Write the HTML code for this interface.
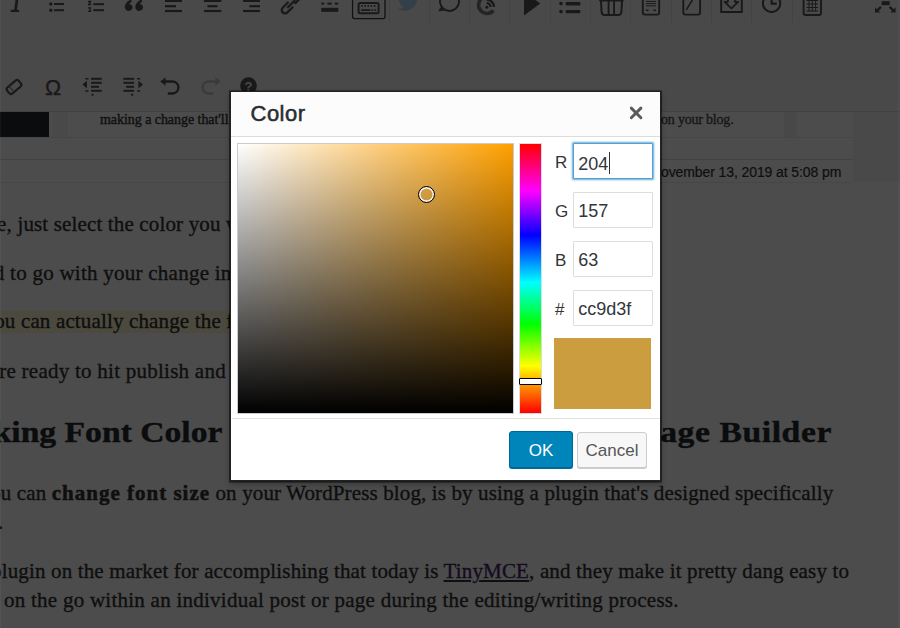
<!DOCTYPE html>
<html><head><meta charset="utf-8">
<style>
*{box-sizing:border-box;margin:0;padding:0}
html,body{width:900px;height:628px;overflow:hidden;background:#fff;position:relative}
.a{position:absolute}
.serif{font-family:"Liberation Serif",serif;color:#333;white-space:nowrap}
.body{font-size:21px;letter-spacing:0.25px;-webkit-text-stroke:0.35px #333}
.head{font-size:29px;font-weight:700;letter-spacing:0;color:#23282d;transform:scaleX(1.16);transform-origin:0 0;-webkit-text-stroke:0.4px #23282d}
.body b{letter-spacing:1px;-webkit-text-stroke:0.5px #333}
.sans{font-family:"Liberation Sans",sans-serif;white-space:nowrap}
#tb{left:0;top:0;width:900px;height:111px;background:#f5f5f5}
.sep{position:absolute;top:0;width:1px;height:23px;background:#e0e0e0}
.ic{position:absolute}
#overlay{left:0;top:0;width:900px;height:628px;background:rgba(0,0,0,0.7)}
#dlg{left:230px;top:91px;width:431px;height:390px;background:#fff;border:1px solid #222;box-shadow:0 0 0 1px rgba(0,0,0,.3),0 1px 0 1px rgba(0,0,0,.3),0 3px 6px rgba(0,0,0,.3)}
#hdr{left:0;top:0;width:429px;height:45px;background:#fcfcfc;border-bottom:1px solid #dcdcdc}
#title{left:19.5px;top:8.5px;font-size:22px;letter-spacing:0.5px;font-weight:400;color:#2a2e33;-webkit-text-stroke:0.55px #2a2e33}
#close{left:397.6px;top:14.4px}
#sv{left:6px;top:51px;width:277px;height:270.5px;border:1px solid #c8ccd0;
 background:linear-gradient(to top,#000,rgba(0,0,0,0)),linear-gradient(to right,#fff,#ffa000)}
#hue{left:288px;top:51px;width:23px;height:271px;border:1px solid #d8dde0;
 background:linear-gradient(to bottom,#f00 0%,#f0f 17.5%,#00f 34%,#0ff 51.5%,#0f0 67%,#ff0 82.5%,#f00 100%)}
#huem{left:288px;top:286px;width:23px;height:7px;border:1.5px solid #000;background:#fff;border-radius:1px}
#svm{left:186.5px;top:93.5px;width:17px;height:17px;border:1.5px solid #000;border-radius:50%;box-shadow:inset 0 0 0 1.4px #fff}
.lbl{position:absolute;font-family:"Liberation Sans",sans-serif;font-size:17px;color:#333}
.inp{position:absolute;left:342px;width:80px;height:36px;border:1px solid #ddd;background:#fff;border-radius:1px;
 font-family:"Liberation Sans",sans-serif;font-size:18px;color:#32373c;padding:7.5px 0 0 4.3px}
#swatch{left:323px;top:246px;width:97px;height:70.5px;background:#cc9d3f}
#ftr{left:1px;top:326px;width:428px;height:1px;background:#e2e2e2}
#ok{left:278px;top:339px;width:64px;height:37px;background:#0085ba;border:1px solid #006799;border-radius:3px;
 box-shadow:0 1px 0 #006799;color:#fff;font-size:17px;text-align:center;padding-top:9px}
#cancel{left:346px;top:340px;width:70px;height:36px;background:#f7f7f7;border:1px solid #ccc;border-radius:3px;
 box-shadow:0 1px 0 #ccc;color:#555;font-size:17px;text-align:center;padding-top:7.5px}
</style></head><body>

<!-- toolbar -->
<div id="tb" class="a">
  <div class="sep" style="left:389px"></div>
  <div class="sep" style="left:429px"></div>
  <div class="sep" style="left:469px"></div>
  <div class="sep" style="left:509px"></div>
  <div class="sep" style="left:550px"></div>
  <div class="sep" style="left:590px"></div>
  <div class="sep" style="left:630px"></div>
  <div class="sep" style="left:671px"></div>
  <div class="sep" style="left:711px"></div>
  <div class="sep" style="left:751px"></div>
  <div class="sep" style="left:792px"></div>
</div>
<svg class="a" style="left:0;top:0" width="900" height="110" viewBox="0 0 900 110">
<g fill="#555" stroke="none">
 <path d="M16.1 -4 L18.9 -4 L16.9 10 L14.1 10 Z"/>
 <rect x="10.7" y="9.8" width="8.4" height="2.2"/>
 <circle cx="50.8" cy="4" r="1.7"/><circle cx="50.8" cy="10.2" r="1.7"/>
 <rect x="54" y="3" width="10" height="2"/><rect x="54" y="9.2" width="10" height="2"/>
 <path d="M88 0.8h3.2v1.4l-1.5 1.6h1.6v1.4h-3.3v-1.3l1.5-1.7h-1.5z"/>
 <path d="M88 7.3h3.2v1.3l-1 1 1 1v1.4h-3.2v-1.3h1.7l-0.8-1.1 0.8-1h-1.7z"/>
 <rect x="93.3" y="3.2" width="10.7" height="2"/><rect x="93.3" y="9.2" width="10.7" height="2"/>
 <path d="M131 -0.5 C127.5 0.8 124.8 3.8 124.8 7 C124.8 9.4 126.4 10.9 128.7 10.9 C130.9 10.9 132.6 9.4 132.6 7.3 C132.6 5.2 131 4.1 129.2 4.2 C129.7 3 130.7 2 131.9 1.4 Z"/>
 <path d="M141.5 -0.5 C138 0.8 135.3 3.8 135.3 7 C135.3 9.4 136.9 10.9 139.2 10.9 C141.4 10.9 143.1 9.4 143.1 7.3 C143.1 5.2 141.5 4.1 139.7 4.2 C140.2 3 141.2 2 142.4 1.4 Z"/>
 <rect x="165" y="-0.2" width="17" height="2.2"/><rect x="165" y="5.1" width="11" height="2.2"/><rect x="165" y="9.9" width="17" height="2.2"/>
 <rect x="204" y="-0.2" width="17.3" height="2.2"/><rect x="207.5" y="5.1" width="10" height="2.2"/><rect x="204" y="9.9" width="17.3" height="2.2"/>
 <rect x="243" y="-0.2" width="17" height="2.2"/><rect x="249.3" y="5.1" width="10.7" height="2.2"/><rect x="243" y="9.9" width="17" height="2.2"/>
 <rect x="321.3" y="2.6" width="3" height="2"/><rect x="327.3" y="2.6" width="4.4" height="2"/><rect x="334.8" y="2.6" width="3.4" height="2"/>
 <rect x="321.3" y="7.8" width="17" height="4"/>
 <path d="M524 -8.5 L540.3 3.5 L524 15.6 Z"/>
 <circle cx="561" cy="3.6" r="1.8"/><circle cx="561" cy="11.6" r="1.8"/>
 <rect x="565.6" y="2" width="14.8" height="3.4" rx="1.2"/><rect x="565.6" y="9.9" width="14.8" height="3.4" rx="1.2"/>
 <rect x="881.7" y="1.2" width="8" height="4"/>
 <path d="M875 12.4 L875 7.3 L876.9 9.2 L880.1 6 L881.8 7.7 L878.6 10.9 L880.3 12.6 Z"/>
 <path d="M895.6 12.4 L895.6 7.3 L893.7 9.2 L890.5 6 L888.8 7.7 L892 10.9 L890.3 12.6 Z"/>
 <circle cx="248.5" cy="85.6" r="8.4"/>
 <circle cx="486.8" cy="7.2" r="1.5"/>
</g>
<g fill="none" stroke="#555" stroke-linecap="round">
 <path d="M292.6 7.2 L287.4 12.4 A3.3 3.3 0 0 1 282.7 7.7 L287.9 2.5" stroke-width="2.3"/>
 <path d="M287.9 7.3 L294.5 0.7" stroke-width="2.3"/>
 <path d="M290.6 -1.6 L295.8 -6.8 A3.3 3.3 0 0 1 300.5 -2.1 L295.3 3.1" stroke-width="2.3"/>
 <rect x="352.6" y="-4" width="32.4" height="22.6" rx="2" stroke-width="1.3" stroke="#3a3a3a"/>
 <rect x="354.2" y="-3" width="29.2" height="20" rx="1" stroke-width="0.8" stroke="#ffffff"/>
 <rect x="358.6" y="2.9" width="20" height="10.4" rx="1.5" stroke-width="2"/>
 <path d="M441.7 -3.95 A9.5 9.5 0 1 0 457.3 -3.95" stroke-width="1.9"/>
 <path d="M441.8 7.2 L439.6 10.4 L443.6 9.9" stroke-width="1.8" stroke-linejoin="round"/>
 <path d="M485.5 -3.4 A 8.5 8.5 0 1 0 493.5 10.5" stroke-width="3.6" stroke="#7a7a7a" stroke-linecap="butt"/>
 <path d="M486.7 3.2 A 3.8 3.8 0 0 1 490.5 7 M486.7 -0.3 A 7.3 7.3 0 0 1 494 7" stroke-width="2.3" stroke-linecap="butt"/>
 <path d="M600.8 -2 L601.6 12 Q601.9 15 604.6 15 L618.4 15 Q621.1 15 621.4 12 L622.2 -2" stroke-width="2"/>
 <path d="M608.6 0.5 L608.6 14.5 M614.1 0.5 L614.1 14.5" stroke-width="1.9"/>
 <path d="M600 0.6 L622.8 0.6" stroke-width="1.8"/>
 <rect x="642.8" y="-4" width="16.4" height="18.6" rx="2" stroke-width="1.9"/>
 <path d="M646 1.4h10M646 3.6h10M646 5.8h10" stroke-width="1" stroke-linecap="butt"/>
 <path d="M646 10.3h2.6M653.4 10.3h2.6" stroke-width="1.5" stroke-linecap="butt"/>
 <rect x="683.3" y="-4" width="16.8" height="18.6" rx="2" stroke-width="1.9"/>
 <path d="M686.6 9.4 L692.3 0" stroke-width="1.5"/>
 <path d="M721.2 -4 L721.2 12 L741.8 12 L741.8 -4" stroke-width="2" stroke-linecap="butt"/>
 <path d="M727.9 -4 V1.8 H724.6 L731.4 8.3 L738.2 1.8 H734.9 V-4" stroke-width="1.8" stroke-linejoin="round"/>
 <circle cx="771.6" cy="3.4" r="8.7" stroke-width="2.1"/>
 <path d="M771.6 -1 V3.6 H776.8" stroke-width="2.1" stroke-linecap="butt"/>
 <rect x="803.6" y="-4" width="17.4" height="19" rx="2" stroke-width="1.9"/>
 <path d="M806.5 0.5h11.6M806.5 4h11.6M806.5 7.5h11.6M806.5 11h11.6M809 -3v14.5M812.3 -3v14.5M815.6 -3v14.5" stroke-width="1" stroke-linecap="butt"/>
 <g transform="translate(14 87) rotate(-40)"><rect x="-7.6" y="-3.9" width="15.2" height="7.8" rx="2.4" stroke-width="2.1"/><path d="M-3.2 -3 V3" stroke-width="1.2" stroke="#8a8a8a"/></g>
 <path d="M163.5 81.5 H172.5 A6 6 0 0 1 172.5 93.5 H167.8" stroke-width="2.3" stroke-linecap="butt"/>
 <path d="M217.5 81.5 H208.5 A6 6 0 0 0 208.5 93.5 H213.2" stroke-width="2.3" stroke="#c4c4c4" stroke-linecap="butt"/>
</g>
<path d="M160.2 81.5 L165.6 77.3 L165.6 85.7 Z" fill="#555"/>
<path d="M220.8 81.5 L215.4 77.3 L215.4 85.7 Z" fill="#c4c4c4"/>
<g fill="#555">
 <rect x="361.2" y="5.2" width="1.7" height="1.7"/><rect x="364.3" y="5.2" width="1.7" height="1.7"/><rect x="367.4" y="5.2" width="1.7" height="1.7"/><rect x="370.5" y="5.2" width="1.7" height="1.7"/><rect x="373.8" y="5.2" width="1.7" height="1.7"/>
 <rect x="361.2" y="9.2" width="9.2" height="1.7"/><rect x="371.5" y="9.2" width="1.7" height="1.7"/><rect x="374.4" y="9.2" width="1.7" height="1.7"/>
</g>
<g fill="#555">
 <rect x="91" y="77.8" width="10.7" height="2"/><rect x="91" y="81.8" width="10.7" height="2"/><rect x="91" y="85.8" width="8" height="2"/><rect x="91" y="89.8" width="10.7" height="2"/><rect x="91.5" y="93.8" width="2.2" height="1.8"/>
 <path d="M82.4 84.6 L87 80.8 L87 88.4 Z"/>
 <rect x="85.3" y="78" width="3.2" height="1.5"/><rect x="85.3" y="90.2" width="3.2" height="1.5"/>
 <rect x="123.4" y="77.8" width="10.7" height="2"/><rect x="123.4" y="81.8" width="10.7" height="2"/><rect x="126" y="85.8" width="8" height="2"/><rect x="123.4" y="89.8" width="10.7" height="2"/><rect x="131" y="93.8" width="2.2" height="1.8"/>
 <path d="M143 84.6 L138.4 80.8 L138.4 88.4 Z"/>
 <rect x="137" y="78" width="3.2" height="1.5"/><rect x="137" y="90.2" width="3.2" height="1.5"/>
</g>
<g transform="translate(397.5 -9.5) scale(0.93)" fill="#a8d4f2" opacity="0.95"><path d="M23.953 4.57a10 10 0 01-2.825.775 4.958 4.958 0 002.163-2.723c-.951.555-2.005.959-3.127 1.184a4.920 4.920 0 00-8.384 4.482C7.69 8.095 4.067 6.13 1.64 3.162a4.822 4.822 0 00-.666 2.475c0 1.71.87 3.213 2.188 4.096a4.904 4.904 0 01-2.228-.616v.06a4.923 4.923 0 003.946 4.827 4.996 4.996 0 01-2.212.085 4.936 4.936 0 004.604 3.417 9.867 9.867 0 01-6.102 2.105c-.39 0-.779-.023-1.17-.067a13.995 13.995 0 007.557 2.209c9.053 0 13.998-7.496 13.998-13.985 0-.21 0-.42-.015-.63A9.935 9.935 0 0024 4.590z"/></g>
<text x="244.6" y="90.6" font-family="Liberation Sans" font-weight="700" font-size="13" fill="#f0f0f0">?</text>
<text x="45" y="94.8" font-family="Liberation Sans" font-size="21.5" fill="#555" stroke="#555" stroke-width="0.4">&#937;</text>
</svg>

<!-- embed boxes -->
<div class="a" style="left:0;top:111px;width:900px;height:1px;background:#dcdcdc"></div>
<div class="a" style="left:853px;top:112px;width:47px;height:70px;background:#f3f3f3"></div>
<div class="a" style="left:0;top:112px;width:49px;height:25px;background:#23282d"></div>
<div class="a" style="left:49px;top:112px;width:3px;height:25px;background:#fdfdfd"></div>
<div class="a" style="left:52px;top:112px;width:16px;height:25px;background:#f4f4f4"></div>
<div class="a" style="left:784px;top:112px;width:13px;height:25px;background:#f1f1f1"></div>
<div class="a" style="left:0;top:137px;width:853px;height:1px;background:#ececec"></div>
<div class="a" style="left:0;top:159px;width:853px;height:1px;background:#e0e0e0"></div>
<div class="a" style="left:0;top:182px;width:853px;height:1px;background:#ececec"></div>
<div class="a serif" style="left:100px;top:112px;font-size:14px;letter-spacing:-0.05px;color:#3a3a3a;-webkit-text-stroke:0.4px #3a3a3a">making a change that'll make a big difference</div>
<div class="a serif" style="left:661px;top:111.5px;font-size:14px;letter-spacing:-0.2px;color:#4a4a4a;-webkit-text-stroke:0.3px #4a4a4a">on your blog.</div>
<div class="a sans" style="left:651px;top:163.5px;font-size:14px;color:#333;letter-spacing:-0.1px;-webkit-text-stroke:0.2px #333">November 13, 2019 at 5:08 pm</div>

<!-- content -->
<div id="L1" class="a serif body" style="letter-spacing:0.15px;left:-64px;top:212px">a phrase, <span class="anc">just</span> select the color you want and click apply.</div>
<div id="L2" class="a serif body" style="left:-90px;top:261px">you'll need <span class="anc">to</span> go with your change in font color.</div>
<div class="a" style="left:0;top:311px;width:240px;height:22px;background:#fff7cf"></div>
<div id="L3" class="a serif body" style="letter-spacing:0.15px;left:-19px;top:309px">You <span class="anc">can</span> actually change the font color.</div>
<div id="L4" class="a serif body" style="left:-37px;top:358.5px">you're <span class="anc">ready</span> to hit publish and go.</div>
<div id="H1" class="a serif head" style="left:-56.5px;top:416px">Making <span class="anc">Font</span> Color</div>
<div id="H2" class="a serif head" style="letter-spacing:0.5px;left:639px;top:416px">Page <span class="anc">Builder</span></div>
<div id="P1" class="a serif body" style="letter-spacing:0.13px;left:-23px;top:481px">You <span class="anc">can</span> <b>change font size</b> on your WordPress blog, is by using a plugin that's designed specifically</div>
<div id="P2" class="a serif body" style="left:-64px;top:510px">for this<span class="anc">.</span></div>
<div id="P3" class="a serif body" style="letter-spacing:0.15px;left:-9px;top:559px">plugin <span class="anc">on</span> the market for accomplishing that today is <u style="color:#551a8b">TinyMCE</u>, and they make it pretty dang easy to</div>
<div id="P4" class="a serif body" style="left:4px;top:588px"><span class="anc">on</span> the go within an individual post or page during the editing/writing process.</div>

<div id="overlay" class="a"></div>
<div class="a" style="left:0;top:0;width:1px;height:628px;background:rgba(255,255,255,0.04)"></div>
<div class="a" style="left:898px;top:0;width:2px;height:628px;background:rgba(255,255,255,0.03)"></div>

<!-- dialog -->
<div id="dlg" class="a">
  <div id="hdr" class="a"><div id="title" class="a sans">Color</div>
    <svg id="close" class="a" width="14" height="14" viewBox="0 0 14 14"><path d="M2.3 2.1L11.9 11.7M11.9 2.1L2.3 11.7" stroke="#5a5a5a" stroke-width="2.9" stroke-linecap="round"/></svg>
  </div>
  <div id="sv" class="a"></div>
  <div id="svm" class="a"></div>
  <div id="hue" class="a"></div>
  <div id="huem" class="a"></div>
  <div class="lbl" style="left:324px;top:61px">R</div>
  <div class="lbl" style="left:324px;top:110px">G</div>
  <div class="lbl" style="left:324px;top:159px">B</div>
  <div class="lbl" style="left:324px;top:208px">#</div>
  <div class="inp" style="top:51px;border-color:#5b9dd9;box-shadow:0 0 2px 0.5px rgba(30,140,190,.7)">204<span style="display:inline-block;width:1px;height:22px;background:#333;vertical-align:-4px;margin-left:1px"></span></div>
  <div class="inp" style="top:100px">157</div>
  <div class="inp" style="top:149px">63</div>
  <div class="inp" style="top:198px">cc9d3f</div>
  <div id="swatch" class="a"></div>
  <div id="ftr" class="a"></div>
  <div id="ok" class="a sans">OK</div>
  <div id="cancel" class="a sans">Cancel</div>
</div>
</body></html>
